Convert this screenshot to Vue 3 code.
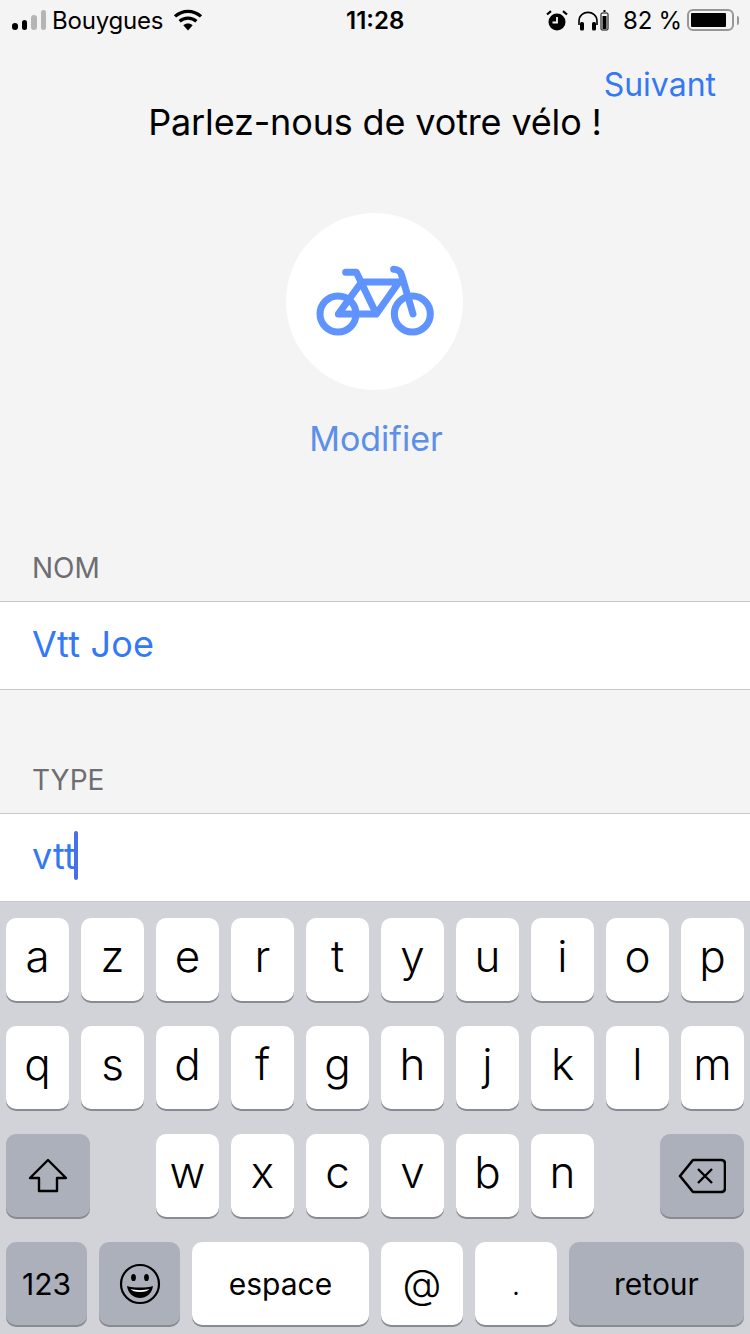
<template>
  <div class="page">
    <div class="status-bar">
      <div class="status-left">
        <div class="signal">
          <span v-for="bar in signalBars" :key="bar.h" class="signal-bar" :class="{ off: bar.off }" :style="{ height: bar.h + 'px' }" />
        </div>
        <span class="carrier">Bouygues</span>
        <svg class="wifi" width="30" height="22" viewBox="0 0 30 22">
          <path d="M15 21.5 L10.3 16.2 C13 14 17 14 19.7 16.2 Z" fill="#000" />
          <path d="M6.6 12.3 C11.4 8 18.6 8 23.4 12.3" fill="none" stroke="#000" stroke-width="3.2" />
          <path d="M2 7.4 C9.6 .6 20.4 .6 28 7.4" fill="none" stroke="#000" stroke-width="3.2" />
        </svg>
      </div>
      <span class="clock">11:28</span>
      <div class="status-right">
        <svg width="22" height="21" viewBox="0 0 22 21">
          <circle cx="11" cy="12" r="8.5" fill="#000" />
          <path d="M11 7 V12.5 H6.5" fill="none" stroke="#f4f4f4" stroke-width="1.8" />
          <path d="M1 4.5 L5 1.2 M21 4.5 L17 1.2" stroke="#000" stroke-width="2.2" />
        </svg>
        <svg class="phones" width="22" height="21" viewBox="0 0 22 21">
          <path d="M2 15 V11 C2 -.5 20 -.5 20 11 V15" fill="none" stroke="#000" stroke-width="1.6" />
          <rect x="3" y="12" width="4" height="8.5" rx="1.6" fill="#000" />
          <rect x="15" y="12" width="4" height="8.5" rx="1.6" fill="#000" />
        </svg>
        <svg class="mini-batt" width="9" height="21" viewBox="0 0 9 21">
          <rect x="3.5" y="0" width="2" height="2" fill="#000" />
          <rect x="1" y="3" width="7" height="17" rx="1" fill="none" stroke="#000" stroke-width="1" />
          <rect x="2.5" y="6" width="4" height="13" fill="#000" />
        </svg>
        <span class="percent">82 %</span>
        <div class="battery">
          <div class="battery-fill" />
        </div>
        <div class="battery-nub" />
      </div>
    </div>

    <div class="nav">
      <span class="next">Suivant</span>
    </div>
    <h1 class="title">Parlez-nous de votre vélo !</h1>

    <div class="avatar">
      <svg width="143.33" height="83.33" viewBox="98 179 430 250">
        <g fill="none" stroke="#5f93ff" stroke-width="21" stroke-linecap="round" stroke-linejoin="round">
          <circle cx="203" cy="341" r="54" />
          <circle cx="426" cy="341" r="54" />
          <path d="M226 216 H258 L318 341 H204 L274 245 H386 L318 341" />
          <path d="M370 207 C384 207 392 215 394 225 L428 341" />
        </g>
      </svg>
    </div>
    <div class="edit">Modifier</div>

    <div class="section-label first">NOM</div>
    <div class="field"><span class="field-text">Vtt Joe</span></div>
    <div class="section-label second">TYPE</div>
    <div class="field"><span class="field-text">vtt</span><i class="caret" /></div>

    <div class="keyboard">
      <div class="key-row">
        <div v-for="k in row1" :key="k" class="key letter">{{ k }}</div>
      </div>
      <div class="key-row">
        <div v-for="k in row2" :key="k" class="key letter">{{ k }}</div>
      </div>
      <div class="key-row between">
        <div class="key dark wide">
          <svg width="40" height="36" viewBox="0 0 40 36">
            <path d="M20 2 L38 20 H29 V33 H11 V20 H2 Z" fill="none" stroke="#000" stroke-width="2.4" stroke-linejoin="round" />
          </svg>
        </div>
        <div class="letters">
          <div v-for="k in row3" :key="k" class="key letter">{{ k }}</div>
        </div>
        <div class="key dark wide">
          <svg width="48" height="36" viewBox="0 0 48 36">
            <path d="M15 2 H43 Q47 2 47 6 V30 Q47 34 43 34 H15 L2 18 Z" fill="none" stroke="#000" stroke-width="2.6" stroke-linejoin="round" />
            <path d="M20 11 L34 25 M34 11 L20 25" stroke="#000" stroke-width="2.4" />
          </svg>
        </div>
      </div>
      <div class="key-row">
        <div class="key dark small w81">123</div>
        <div class="key dark w81">
          <svg width="42" height="42" viewBox="0 0 42 42">
            <circle cx="21" cy="21" r="19" fill="none" stroke="#000" stroke-width="2.2" />
            <ellipse cx="14.5" cy="14.5" rx="2.4" ry="3.6" fill="#000" />
            <ellipse cx="27.5" cy="14.5" rx="2.4" ry="3.6" fill="#000" />
            <path d="M8 23 C14 25 28 25 34 23 C33 31 27 35 21 35 C15 35 9 31 8 23 Z" fill="#000" />
            <path d="M11.5 26 C17 27.5 25 27.5 30.5 26 C29 28 26 29 21 29 C16 29 13 28 11.5 26 Z" fill="#fff" />
          </svg>
        </div>
        <div class="key small w177">espace</div>
        <div class="key at w82">@</div>
        <div class="key dot w82">.</div>
        <div class="key dark small w175">retour</div>
      </div>
    </div>
  </div>
</template>

<script setup>
const signalBars = [
  { h: 7, off: false },
  { h: 10, off: false },
  { h: 15, off: true },
  { h: 20, off: true },
]

const row1 = ['a', 'z', 'e', 'r', 't', 'y', 'u', 'i', 'o', 'p']
const row2 = ['q', 's', 'd', 'f', 'g', 'h', 'j', 'k', 'l', 'm']
const row3 = ['w', 'x', 'c', 'v', 'b', 'n']
</script>

<style>
html,
body {
  margin: 0;
}
</style>

<style scoped>
.page {
  background: #f4f4f4;
  color: #000;
  display: flex;
  flex-direction: column;
  font-family: Inter, "Liberation Sans", sans-serif;
  height: 1334px;
  overflow: hidden;
  width: 750px;
}

.status-bar {
  align-items: center;
  display: flex;
  flex: none;
  height: 40px;
  justify-content: space-between;
  padding: 0 11px 0 12px;
  position: relative;
}

.status-left {
  align-items: center;
  display: flex;
}

.signal {
  align-items: flex-end;
  display: flex;
  gap: 4px;
  height: 20px;
}

.signal-bar {
  background: #000;
  border-radius: 3px;
  width: 5.5px;
}

.signal-bar.off {
  background: #b5b5b5;
}

.carrier {
  font-size: 24px;
  letter-spacing: -0.2px;
  margin-left: 6px;
}

.wifi {
  margin-left: 10px;
}

.clock {
  font-size: 24px;
  font-weight: 600;
  left: 346px;
  position: absolute;
}

.status-right {
  align-items: center;
  display: flex;
}

.phones {
  margin-left: 9px;
}

.mini-batt {
  margin-left: 1px;
}

.percent {
  font-size: 24px;
  letter-spacing: -0.2px;
  margin-left: 14px;
}

.battery {
  border: 2px solid #979797;
  border-radius: 6px;
  box-sizing: border-box;
  height: 22px;
  margin-left: 5px;
  padding: 2px;
  width: 47px;
}

.battery-fill {
  background: #000;
  border-radius: 1px;
  height: 100%;
  width: 35px;
}

.battery-nub {
  background: #979797;
  border-radius: 0 2px 2px 0;
  height: 9px;
  margin-left: 3px;
  width: 2px;
}

.nav {
  display: flex;
  flex: none;
  justify-content: flex-end;
  padding: 25px 34px 0 0;
}

.next {
  color: #3478f6;
  font-size: 32px;
  line-height: 40px;
}

.title {
  flex: none;
  font-size: 36px;
  font-weight: 400;
  letter-spacing: -0.15px;
  line-height: 44px;
  margin: -5px 0 0;
  text-align: center;
}

.avatar {
  align-items: center;
  align-self: center;
  background: #fff;
  border-radius: 50%;
  display: flex;
  flex: none;
  height: 177px;
  justify-content: center;
  margin: 69px 0 0 -1px;
  width: 177px;
}

.edit {
  color: #5b8fe8;
  flex: none;
  font-size: 34px;
  line-height: 44px;
  margin-top: 27px;
  padding-left: 2px;
  text-align: center;
}

.section-label {
  color: #6d6d72;
  flex: none;
  font-size: 28px;
  line-height: 34px;
  padding-bottom: 1px;
  padding-left: 32px;
}

.section-label.first {
  margin-top: 90px;
}

.section-label.second {
  margin-top: 73px;
}

.field {
  align-items: center;
  background: #fff;
  border-bottom: 1px solid #c8c7cc;
  border-top: 1px solid #c8c7cc;
  box-sizing: border-box;
  color: #3478f6;
  display: flex;
  flex: none;
  font-size: 36px;
  height: 89px;
  margin-top: 15px;
  padding-left: 32px;
}

.field-text {
  letter-spacing: 0.2px;
  margin-top: -3px;
}

.caret {
  background: #4a6ee8;
  border-radius: 2px;
  height: 49px;
  margin-left: -2px;
  margin-top: -4px;
  width: 4px;
}

.keyboard {
  background: #d1d3d9;
  display: flex;
  flex: 1;
  flex-direction: column;
  gap: 25px;
  padding-top: 16px;
}

.key-row {
  display: flex;
  gap: 12px;
  padding: 0 6px;
}

.key-row.between {
  justify-content: space-between;
}

.letters {
  display: flex;
  gap: 12px;
}

.key {
  align-items: center;
  background: #fff;
  border-radius: 10px;
  box-shadow: 0 2px 0 #888b91;
  display: flex;
  flex: none;
  font-size: 44px;
  font-weight: 300;
  height: 83px;
  justify-content: center;
  width: 63px;
}

.key.letter {
  box-sizing: border-box;
  padding-bottom: 8px;
}

.key.dark {
  background: #abb0ba;
}

.key.wide {
  width: 84px;
}

.key.small {
  font-size: 30px;
  font-weight: 400;
}

.key.at {
  font-size: 40px;
}

.key.dot {
  font-size: 30px;
}

.w81 {
  width: 81px;
}

.w82 {
  width: 82px;
}

.w177 {
  width: 177px;
}

.w175 {
  width: 175px;
}
</style>
